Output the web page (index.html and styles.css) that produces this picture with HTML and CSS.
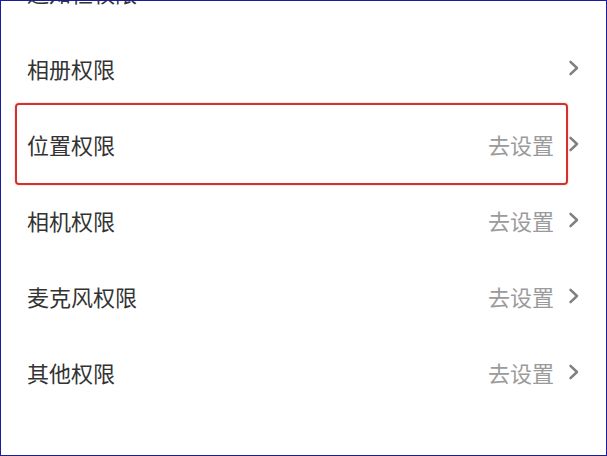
FILE: index.html
```html
<!DOCTYPE html>
<html lang="zh-CN">
<head>
<meta charset="utf-8">
<title>权限设置</title>
<link rel="stylesheet" href="styles.css">
</head>
<body>
<div class="frame">
  <ul class="list">
    <li class="row row-cut">
      <span class="label">通知栏权限</span>
      <span class="right"><svg class="chev" viewBox="0 0 12 16"><path d="M2.5 1.8 L9 8 L2.5 14.2"/></svg></span>
    </li>
    <li class="row">
      <span class="label">相册权限</span>
      <span class="right"><svg class="chev" viewBox="0 0 12 16"><path d="M2.5 1.8 L9 8 L2.5 14.2"/></svg></span>
    </li>
    <li class="row row-active">
      <span class="label">位置权限</span>
      <span class="right"><span class="action">去设置</span><svg class="chev" viewBox="0 0 12 16"><path d="M2.5 1.8 L9 8 L2.5 14.2"/></svg></span>
    </li>
    <li class="row">
      <span class="label">相机权限</span>
      <span class="right"><span class="action">去设置</span><svg class="chev" viewBox="0 0 12 16"><path d="M2.5 1.8 L9 8 L2.5 14.2"/></svg></span>
    </li>
    <li class="row">
      <span class="label">麦克风权限</span>
      <span class="right"><span class="action">去设置</span><svg class="chev" viewBox="0 0 12 16"><path d="M2.5 1.8 L9 8 L2.5 14.2"/></svg></span>
    </li>
    <li class="row">
      <span class="label">其他权限</span>
      <span class="right"><span class="action">去设置</span><svg class="chev" viewBox="0 0 12 16"><path d="M2.5 1.8 L9 8 L2.5 14.2"/></svg></span>
    </li>
  </ul>
</div>
</body>
</html>
```
FILE: styles.css
```css
html, body {
  margin: 0;
  padding: 0;
  background: #ffffff;
}
body {
  font-family: "Noto Sans CJK SC", "Noto Sans", sans-serif;
}
.frame {
  box-sizing: border-box;
  width: 607px;
  height: 456px;
  border: 1px solid #1c1c9c;
  background: #ffffff;
  overflow: hidden;
}
.list {
  list-style: none;
  margin: -47px 0 0 0;
  padding: 0;
}
.row {
  position: relative;
  height: 76px;
  display: flex;
  align-items: center;
  justify-content: space-between;
  padding: 0 26px 0 26px;
}
.label {
  font-size: 22px;
  color: #333333;
  line-height: 1;
}
.right {
  display: flex;
  align-items: center;
  gap: 14px;
}
.action {
  font-size: 22px;
  color: #9b9b9b;
  line-height: 1;
}
.chev {
  width: 12px;
  height: 16px;
  fill: none;
  stroke: #808080;
  stroke-width: 2.5;
  stroke-linecap: round;
  stroke-linejoin: round;
}
.row-active::after {
  content: "";
  position: absolute;
  left: 14px;
  right: 38px;
  top: -3px;
  bottom: -3px;
  border: 2.5px solid #d6302c;
  border-radius: 4px;
  box-shadow: 0 0 2px rgba(214, 48, 44, 0.35);
  pointer-events: none;
}
```
